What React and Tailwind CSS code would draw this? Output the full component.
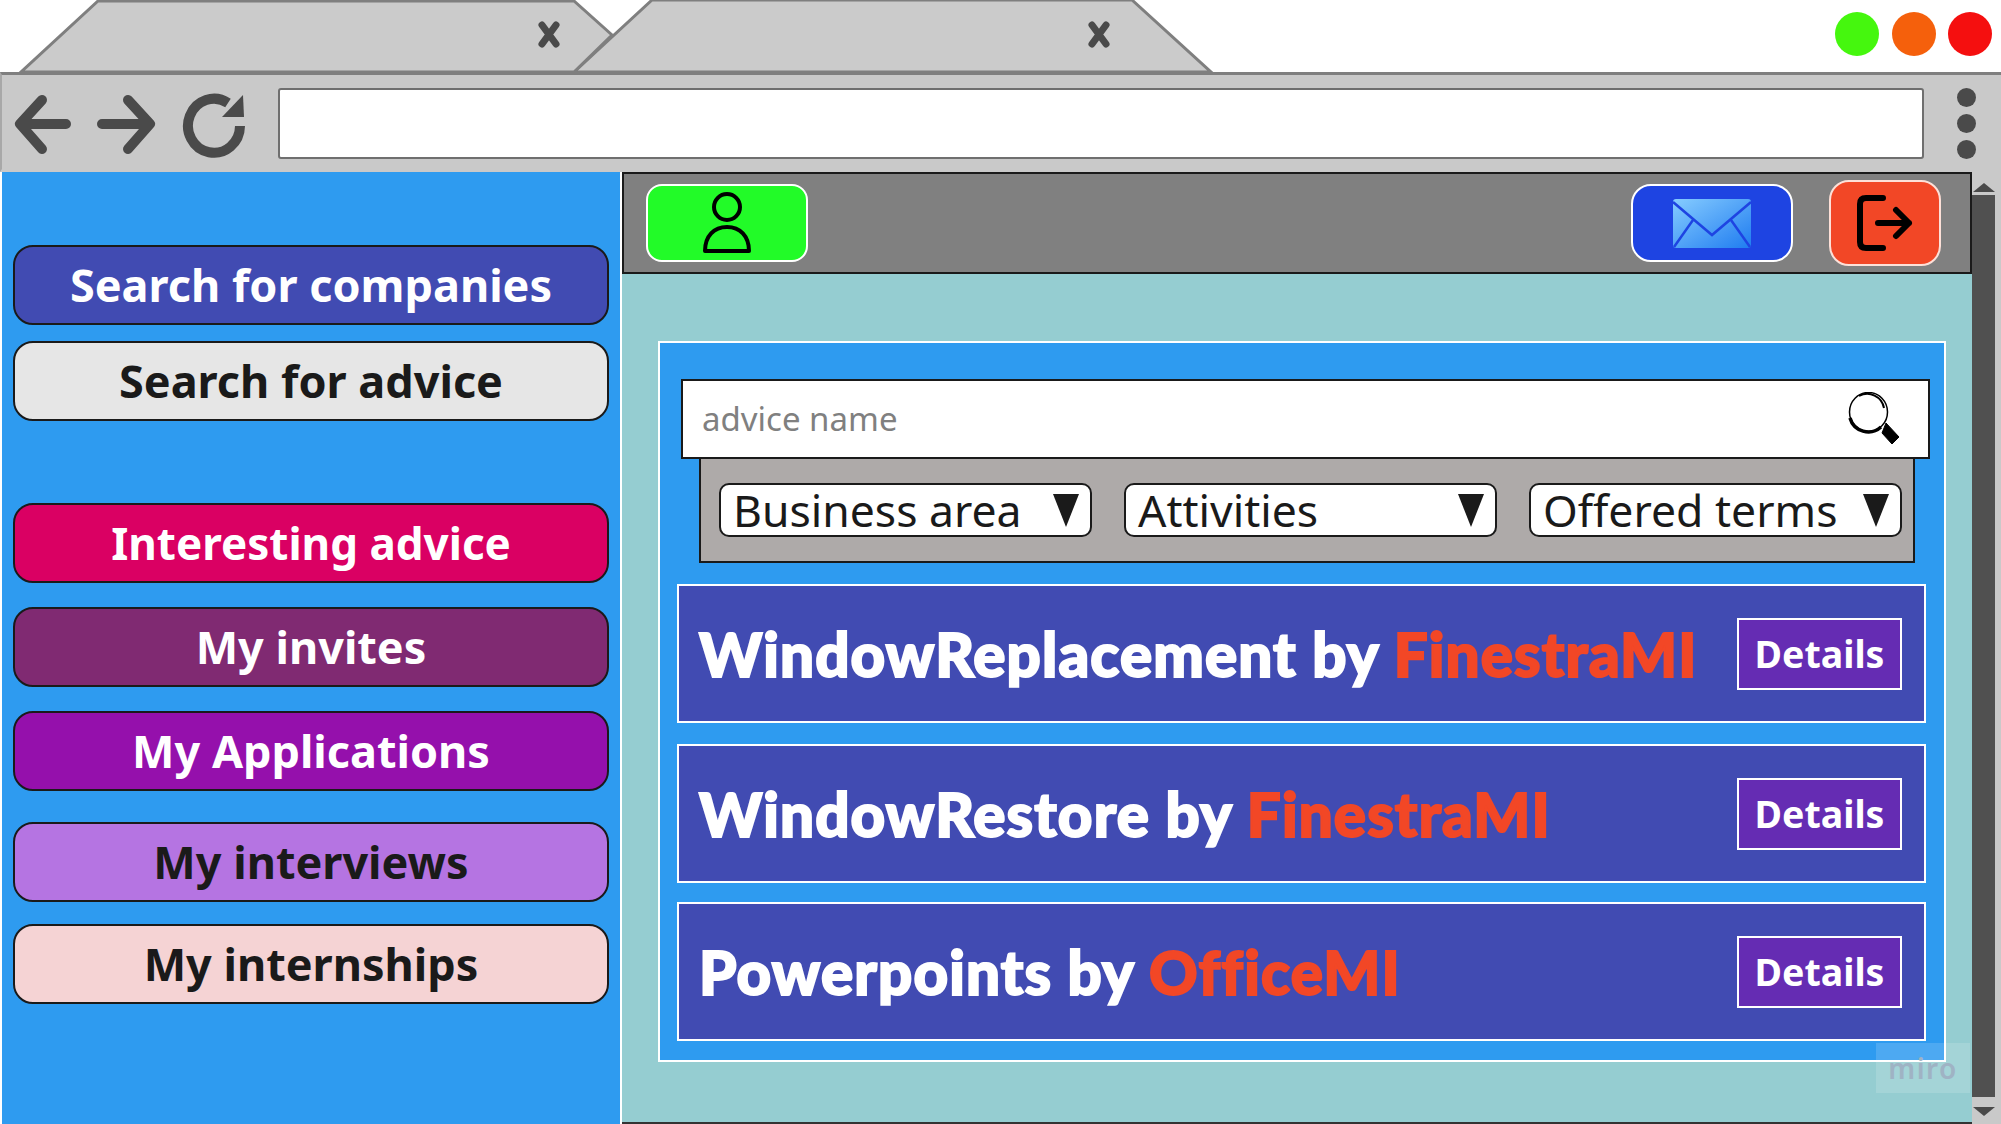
const sideButtons = [
    { label: 'Search for companies', bg: 'bg-[#414bb2] text-white text-[45px]', top: 'mt-[73px]' },
    { label: 'Search for advice', bg: 'bg-[#e6e6e6] text-[#1a1a1a] text-[45px]', top: 'mt-4' },
    { label: 'Interesting advice', bg: 'bg-[#da0063] text-white text-[44px]', top: 'mt-[82px]' },
    { label: 'My invites', bg: 'bg-[#802a72] text-white text-[45px]', top: 'mt-6' },
    { label: 'My Applications', bg: 'bg-[#9510ac] text-white text-[45px]', top: 'mt-6' },
    { label: 'My interviews', bg: 'bg-[#b574e2] text-[#1a1a1a] text-[45px]', top: 'mt-[31px]' },
    { label: 'My internships', bg: 'bg-[#f5d3d4] text-[#1a1a1a] text-[45px]', top: 'mt-[22px]' },
]

const results = [
    { name: 'WindowReplacement', by: 'FinestraMI', top: 'mt-[21px]' },
    { name: 'WindowRestore', by: 'FinestraMI', top: 'mt-[21px]' },
    { name: 'Powerpoints', by: 'OfficeMI', top: 'mt-[19px]' },
]

const filters = ['Business area', 'Attivities', 'Offered terms']

function TabStrip() {
    return (
        <svg width="1215" height="73" viewBox="0 0 1215 73" className="block">
            <path d="M652 0 L1132 0 L1211 72 L574 72 Z" fill="#cbcbcb" stroke="#7f7f7f" strokeWidth="3" />
            <path d="M98 1 L574 1 L612 35 L574 72 L21 72 Z" fill="#cbcbcb" stroke="#7f7f7f" strokeWidth="3" />
            <path d="M542 25 L556 44 M556 25 L542 44" stroke="#4a4a4a" strokeWidth="7" strokeLinecap="round" />
            <path d="M1092 25 L1106 44 M1106 25 L1092 44" stroke="#4a4a4a" strokeWidth="7" strokeLinecap="round" />
        </svg>
    )
}

function NavIcons() {
    return (
        <svg width="240" height="70" viewBox="0 0 240 70" className="block shrink-0">
            <path d="M30 11 L8 35 L30 60 M8 35 L54 35" fill="none" stroke="#4a4a4a" strokeWidth="10" strokeLinecap="round" strokeLinejoin="round" />
            <path d="M116 11 L138 35 L116 60 M90 35 L138 35" fill="none" stroke="#4a4a4a" strokeWidth="10" strokeLinecap="round" strokeLinejoin="round" />
            <path d="M228 37 A 26 27 0 1 1 216 14" fill="none" stroke="#4a4a4a" strokeWidth="10" />
            <path d="M231 6 L232 28 L210 28 Z" fill="#4a4a4a" />
        </svg>
    )
}

function PersonIcon() {
    return (
        <svg width="50" height="62" viewBox="0 0 50 62" fill="none" stroke="#000" strokeWidth="4" strokeLinejoin="round">
            <circle cx="25" cy="15" r="13" />
            <path d="M3 59 C3 44 12 35 25 35 C38 35 47 44 47 59 Z" />
        </svg>
    )
}

function MailIcon() {
    return (
        <svg width="78" height="49" viewBox="0 0 78 49">
            <defs>
                <linearGradient id="mailFill" x1="0" y1="0" x2="1" y2="1">
                    <stop offset="0" stopColor="#86ccff" />
                    <stop offset="1" stopColor="#1f7cf0" />
                </linearGradient>
            </defs>
            <rect width="78" height="49" rx="3" fill="url(#mailFill)" />
            <path d="M0 3 L39 36 L78 3 M20 21 L1 48 M58 21 L77 48" fill="none" stroke="#1e44e2" strokeWidth="2.5" />
        </svg>
    )
}

function LogoutIcon() {
    return (
        <svg width="56" height="56" viewBox="0 0 56 56" fill="none" stroke="#000" strokeWidth="6" strokeLinecap="round" strokeLinejoin="round">
            <path d="M26 3 L9 3 Q3 3 3 9 L3 47 Q3 53 9 53 L26 53" />
            <path d="M21 28 L52 28 M39 15 L52 28 L39 41" />
        </svg>
    )
}

function SearchIcon() {
    return (
        <svg width="54" height="54" viewBox="0 0 54 54" fill="none">
            <ellipse cx="23.5" cy="20" rx="19" ry="19.5" stroke="#000" strokeWidth="1.5" />
            <path d="M5 26 A 19 19 0 0 0 36 35" stroke="#000" strokeWidth="3.5" />
            <path d="M14 4 A 17 17 0 0 1 39 16" stroke="#000" strokeWidth="2" />
            <path d="M41 31 L54 45 L47 52 L37 41 Z" fill="#000" stroke="#000" strokeWidth="1" strokeLinejoin="round" />
        </svg>
    )
}

function Dropdown({ label }) {
    return (
        <div className="flex h-[54px] w-[373px] shrink-0 items-center justify-between rounded-[10px] border-2 border-[#1a1a1a] bg-white pl-3 pr-[11px] text-[44.5px] leading-none text-[#1a1a1a]">
            <span>{label}</span>
            <span className="h-0 w-0 border-x-[13px] border-t-[33px] border-x-transparent border-t-[#1a1a1a]" />
        </div>
    )
}

export default function App() {
    return (
        <div className="relative flex h-[1124px] w-[2001px] flex-col overflow-hidden bg-white font-['Noto_Sans','Open_Sans',sans-serif]">
            {/* browser chrome */}
            <div className="flex h-[72px] shrink-0 items-start justify-between pr-[9px]">
                <TabStrip />
                <div className="flex gap-[12.5px] pt-[12px]">
                    <span className="h-11 w-11 rounded-full bg-[#45f70e]" />
                    <span className="h-11 w-11 rounded-full bg-[#f5600c]" />
                    <span className="h-11 w-11 rounded-full bg-[#f50f0f]" />
                </div>
            </div>
            <div className="flex h-[100px] shrink-0 items-center border-y-[3px] border-l-2 border-t-[#7f7f7f] border-b-[#c9c9c9] border-l-[#a8a8a8] bg-[#c9c9c9] pl-[10px] pr-[25px] pt-[3px]">
                <NavIcons />
                <div className="ml-[26px] h-[71px] flex-1 rounded-[3px] border-2 border-[#6f6f6f] bg-white" />
                <div className="ml-[33px] flex flex-col gap-[7px]">
                    <span className="h-[19px] w-[19px] rounded-full bg-[#4a4a4a]" />
                    <span className="h-[19px] w-[19px] rounded-full bg-[#4a4a4a]" />
                    <span className="h-[19px] w-[19px] rounded-full bg-[#4a4a4a]" />
                </div>
            </div>

            <div className="flex min-h-0 flex-1">
                {/* sidebar */}
                <aside className="ml-[2px] flex w-[620px] shrink-0 flex-col border-r-2 border-white bg-[#2e9bf0] px-[11px]">
                    {sideButtons.map((b) => (
                        <div
                            key={b.label}
                            className={`${b.top} ${b.bg} flex h-[80px] shrink-0 items-center justify-center rounded-[20px] border-2 border-[#1a1a1a] font-bold`}
                        >
                            {b.label}
                        </div>
                    ))}
                </aside>

                {/* main */}
                <main className="flex min-w-0 flex-1 flex-col border-b-2 border-[#333] bg-[#95cdd1]">
                    <div className="flex h-[102px] shrink-0 items-center border-2 border-[#1a1a1a] bg-[#808080] pl-[22px] pr-[29px]">
                        <div className="flex h-[78px] w-[162px] items-center justify-center rounded-[16px] border-2 border-white bg-[#22fb28]">
                            <PersonIcon />
                        </div>
                        <div className="ml-auto flex h-[78px] w-[162px] items-center justify-center rounded-[20px] border-2 border-white bg-[#1e44e2]">
                            <MailIcon />
                        </div>
                        <div className="ml-9 flex h-[86px] w-[112px] items-center justify-center rounded-[20px] border-2 border-[#fde0d8] bg-[#f24726]">
                            <LogoutIcon />
                        </div>
                    </div>

                    <section className="ml-9 mr-[26px] mt-[67px] h-[721px] border-2 border-white bg-[#2e9bf0] px-[13px] pt-9">
                        <div className="ml-[8px] mr-[1px] flex h-[80px] items-center justify-between border-2 border-[#1a1a1a] bg-white pl-[19px] pr-[29px] text-[33px] text-[#808080]">
                            <span>advice name</span>
                            <SearchIcon />
                        </div>
                        <div className="ml-[26px] mr-[16px] flex h-[104px] items-start gap-8 border-x-2 border-b-2 border-[#1a1a1a] bg-[#aeaaa9] pl-[18px] pt-[24px]">
                            {filters.map((f) => (
                                <Dropdown key={f} label={f} />
                            ))}
                        </div>
                        {results.map((r) => (
                            <div
                                key={r.name}
                                className={`${r.top} ml-[4px] mr-[5px] flex h-[139px] items-center justify-between border-2 border-white bg-[#414bb2] pl-5 pr-[22px]`}
                            >
                                <span className="font-['Lato',sans-serif] text-[60px] font-black tracking-[1.15px] text-white [-webkit-text-stroke:2px_currentColor] [stroke-linejoin:round]">
                                    {r.name} by <span className="text-[#f24726]">{r.by}</span>
                                </span>
                                <div className="flex h-[72px] w-[165px] items-center justify-center border-2 border-white bg-[#652cb3] pt-[2px] text-[37.5px] font-bold text-white">
                                    Details
                                </div>
                            </div>
                        ))}
                    </section>
                </main>

                {/* scrollbar */}
                <div className="flex w-[29px] shrink-0 flex-col bg-[#c9c9c9] pr-[6px]">
                    <span className="mx-auto mt-[11px] h-0 w-0 border-x-[11px] border-b-[9px] border-x-transparent border-b-[#4a4a4a]" />
                    <div className="mt-[3px] flex-1 bg-[#505050]" />
                    <span className="mx-auto mb-[8px] mt-[10px] h-0 w-0 border-x-[11px] border-t-[9px] border-x-transparent border-t-[#4a4a4a]" />
                </div>
            </div>

            {/* watermark */}
            <div className="absolute left-[1876px] top-[1043px] flex h-[50px] w-[94px] items-center justify-center bg-white/15 text-[28px] font-semibold tracking-wider text-[#9fb3c4]">
                miro
            </div>
        </div>
    )
}
